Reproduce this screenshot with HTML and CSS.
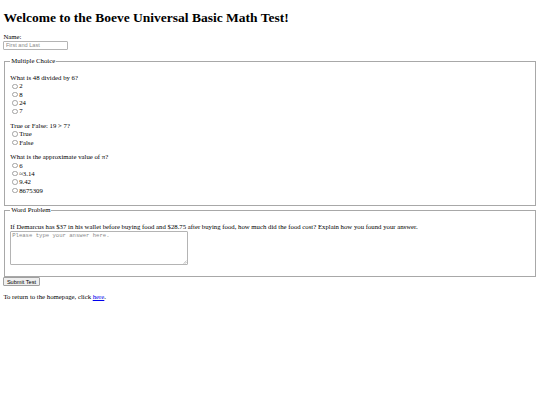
FILE: index.html
```
<!DOCTYPE html>
<html lang="en">
<head>
<meta charset="utf-8">
<title>Boeve Universal Basic Math Test</title>
<link rel="stylesheet" href="styles.css">
</head>
<body class="page">
<h1 class="title">Welcome to the Boeve Universal Basic Math Test!</h1>
<form class="test">
<label class="name-label" for="name">Name:</label>
<input class="text-input" type="text" id="name" placeholder="First and Last">
<fieldset class="group">
<legend class="legend">Multiple Choice</legend>
<div class="question">
<div class="prompt">What is 48 divided by 6?</div>
<div class="option"><input class="radio" type="radio" id="q1a" name="q1"><label for="q1a">2</label></div>
<div class="option"><input class="radio" type="radio" id="q1b" name="q1"><label for="q1b">8</label></div>
<div class="option"><input class="radio" type="radio" id="q1c" name="q1"><label for="q1c">24</label></div>
<div class="option"><input class="radio" type="radio" id="q1d" name="q1"><label for="q1d">7</label></div>
</div>
<div class="question">
<div class="prompt">True or False: 19 &gt; 7?</div>
<div class="option"><input class="radio" type="radio" id="q2a" name="q2"><label for="q2a">True</label></div>
<div class="option"><input class="radio" type="radio" id="q2b" name="q2"><label for="q2b">False</label></div>
</div>
<div class="question">
<div class="prompt">What is the approximate value of π?</div>
<div class="option"><input class="radio" type="radio" id="q3a" name="q3"><label for="q3a">6</label></div>
<div class="option"><input class="radio" type="radio" id="q3b" name="q3"><label for="q3b">≈3.14</label></div>
<div class="option"><input class="radio" type="radio" id="q3c" name="q3"><label for="q3c">9.42</label></div>
<div class="option"><input class="radio" type="radio" id="q3d" name="q3"><label for="q3d">8675309</label></div>
</div>
</fieldset>
<fieldset class="group">
<legend class="legend">Word Problem</legend>
<div class="question">
<label class="prompt" for="answer">If Demarcus has $37 in his wallet before buying food and $28.75 after buying food, how much did the food cost? Explain how you found your answer.</label>
<div class="answer-wrap">
<textarea class="answer" id="answer" placeholder="Please type your answer here."></textarea>
<svg class="grip" width="4" height="4" viewBox="0 0 4 4" aria-hidden="true"><path d="M0.5 3.7 L3.7 0.5 M2 3.7 L3.7 2" stroke="#8a8a8a" stroke-width="0.5" fill="none"/></svg>
</div>
</div>
</fieldset>
<button class="submit" type="submit">Submit Test</button>
</form>
<p class="footer">To return to the homepage, click <a class="link" href="#">here</a>.</p>
</body>
</html>
```

FILE: styles.css
```
.page {
  margin: 3.4px;
  font-family: "Liberation Serif", "Times New Roman", serif;
  font-size: 6.75px;
  line-height: 7.76px;
  color: #000;
  background: #fff;
}
.title {
  font-size: 13.5px;
  line-height: 15.5px;
  font-weight: bold;
  margin: 7px 0 7px;
}
.test {
  margin: 0;
}
.name-label {
  display: block;
}
.text-input {
  display: block;
  box-sizing: border-box;
  width: 65px;
  height: 8.9px;
  margin: 0;
  padding: 0 1.5px;
  border: 1px solid #b4b4b4;
  border-radius: 1px;
  font-family: "Liberation Sans", Arial, sans-serif;
  font-size: 5.6px;
  line-height: 6.9px;
  background: #fff;
  outline: none;
}
.text-input::placeholder {
  color: #8a8a8a;
}
.group {
  margin: 0 0.85px;
  border: 1px solid #a8a8a8;
  padding: 2.36px 5.06px 4.22px;
  min-width: 0;
}
.text-input + .group {
  margin-top: 7.76px;
}
.legend {
  padding: 0 0.85px;
  line-height: 7.76px;
}
.question {
  margin: 6.75px 0;
}
.prompt {
  display: block;
  line-height: 7.76px;
}
.option {
  display: flex;
  align-items: center;
  height: 8.35px;
  padding-top: 0.4px;
  box-sizing: border-box;
}
.radio {
  appearance: none;
  -webkit-appearance: none;
  box-sizing: border-box;
  width: 5.5px;
  height: 5.5px;
  margin: 0 1.27px 0 2.1px;
  border: 0.6px solid #a2a2a2;
  border-radius: 50%;
  background: #fff;
  flex: none;
}
.answer-wrap {
  position: relative;
  width: 177.6px;
  height: 34.2px;
  margin-bottom: 1.6px;
}
.answer {
  display: block;
  box-sizing: border-box;
  width: 177.6px;
  height: 34.2px;
  margin: 0;
  padding: 0.8px 0.9px;
  border: 1px solid #b4b4b4;
  border-radius: 1px;
  resize: none;
  font-family: "Liberation Mono", "Courier New", monospace;
  font-size: 5.6px;
  line-height: 6.3px;
  outline: none;
}
.answer::placeholder {
  color: #8a8a8a;
}
.grip {
  position: absolute;
  right: 1.2px;
  bottom: 1.2px;
}
.submit {
  box-sizing: border-box;
  height: 8.9px;
  margin: 0;
  padding: 0 2.5px;
  border: 1px solid #a0a0a0;
  border-radius: 1px;
  background: #efefef;
  font-family: "Liberation Sans", Arial, sans-serif;
  font-size: 5.6px;
  line-height: 6px;
  color: #000;
}
.footer {
  margin: 6.75px 0;
}
.link {
  color: #0000ee;
}
```
